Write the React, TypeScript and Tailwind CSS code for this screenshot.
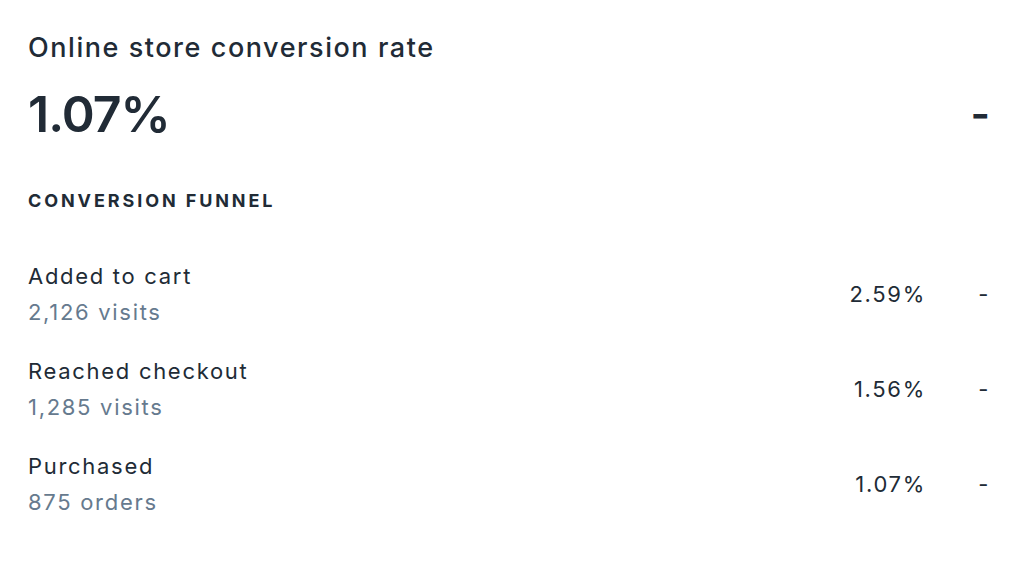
import React from "react";

const rows = [
  { label: "Added to cart", sub: "2,126 visits", pct: "2.59%" },
  { label: "Reached checkout", sub: "1,285 visits", pct: "1.56%" },
  { label: "Purchased", sub: "875 orders", pct: "1.07%" },
];

export default function App() {
  return (
    <div
      className="w-[1024px] h-[561px] bg-white pl-[28px] pr-[34px] pt-[32px] text-[#212b36]"
      style={{ fontFamily: "Inter, 'Noto Sans', sans-serif" }}
    >
      <h1 className="text-[27px] leading-[32px] font-medium tracking-[1.55px]">Online store conversion rate</h1>
      <div className="mt-[20px] flex items-center justify-between h-[60px]">
        <span className="text-[50px] leading-[60px] font-semibold tracking-[-1px]">1.07%</span>
        <span className="text-[42px] leading-[60px] font-semibold">-</span>
      </div>
      <h2 className="mt-[45px] text-[18px] leading-[24px] font-bold tracking-[2.9px]">CONVERSION FUNNEL</h2>
      <div className="mt-[45px] flex flex-col gap-[23px] tracking-[1.7px]">
        {rows.map((r) => (
          <div key={r.label} className="flex items-center">
            <div className="flex-1 flex flex-col">
              <span className="text-[22px] leading-[36px]">{r.label}</span>
              <span className="text-[22px] leading-[36px] text-[#667a8e]">{r.sub}</span>
            </div>
            <span className="text-[22px] leading-[36px] tracking-[1.7px] mr-[-2px]">{r.pct}</span>
            <span className="w-[66px] text-right text-[22px] leading-[36px]">-</span>
          </div>
        ))}
      </div>
    </div>
  );
}
